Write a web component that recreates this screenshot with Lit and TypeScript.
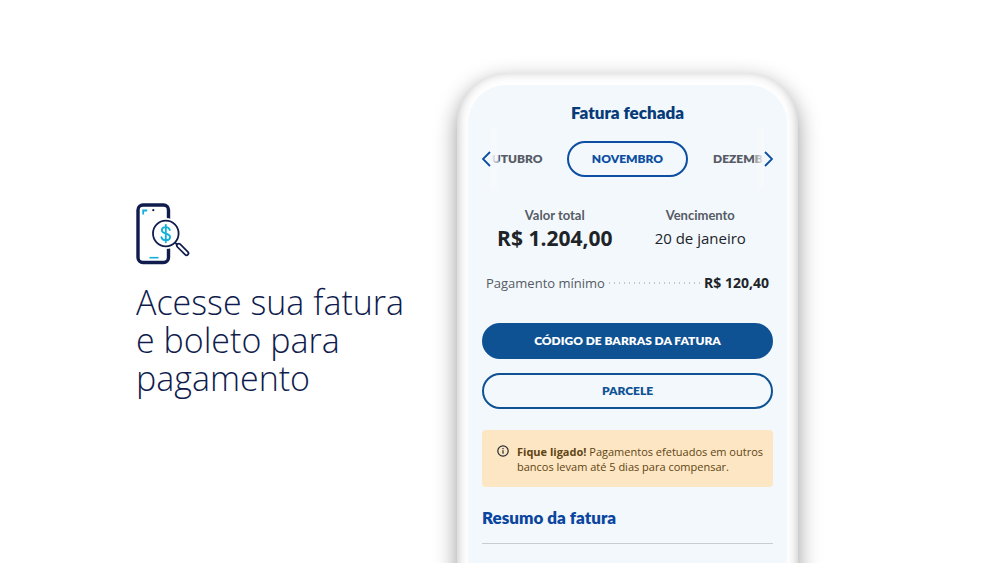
import { LitElement, html, css } from "lit";
import { customElement, state } from "lit/decorators.js";

@customElement("invoice-intro")
export class InvoiceIntro extends LitElement {
  static styles = css`
    :host {
      display: block;
      color: #0f1c4d;
    }
    .icon {
      display: block;
      width: 54px;
      height: 64px;
    }
    .title {
      margin: 17px 0 0;
      max-width: 280px;
      font: 300 34px/38px "Open Sans", sans-serif;
    }
  `;

  render() {
    return html`
      <svg class="icon" viewBox="0 0 54 64" fill="none" aria-hidden="true">
        <rect x="2" y="3" width="30.500" height="57.500" rx="5" stroke="#0f1c4d" stroke-width="3.400" />
        <circle cx="29.800" cy="31.500" r="15.500" fill="#fff" />
        <circle cx="29.800" cy="31.500" r="12.800" stroke="#0f1c4d" stroke-width="1.800" />
        <path d="M39.300 40.800l2.200 2.200" stroke="#0f1c4d" stroke-width="1.800" />
        <path d="M42.800 43.600l7.700 7.700" stroke="#0f1c4d" stroke-width="5.600" stroke-linecap="round" />
        <path d="M42.800 43.600l7.700 7.700" stroke="#fff" stroke-width="2.200" stroke-linecap="round" />
        <path d="M7.200 12.500V8.500h4" stroke="#14b0da" stroke-width="1.800" />
        <circle cx="17.300" cy="8.200" r="1.100" fill="#0f1c4d" />
        <path d="M13.500 55.700h9" stroke="#14b0da" stroke-width="1.600" />
        <path d="M33.800 28c-.6-2-2.100-2.900-4-2.900-2.300 0-3.900 1.200-3.900 3.100 0 4.500 8.200 2.400 8.200 6.900 0 2-1.700 3.200-4.200 3.200-2.300 0-4-1.100-4.500-3.200M29.800 23v17.300"
          stroke="#14b0da" stroke-width="1.900" stroke-linecap="round" />
      </svg>
      <h1 class="title">Acesse sua fatura e&nbsp;boleto para pagamento</h1>
    `;
  }
}

@customElement("month-picker")
export class MonthPicker extends LitElement {
  static styles = css`
    :host {
      display: grid;
      grid-template-columns: 9px minmax(0, 1fr) 9px;
      align-items: center;
    }
    button {
      padding: 0;
      border: 0;
      background: none;
      font: 800 12px/16px Lato, sans-serif;
      cursor: pointer;
    }
    .arrow {
      display: flex;
      color: #0b4ea2;
    }
    .arrow svg {
      width: 9px;
      height: 16px;
    }
    .track {
      position: relative;
      display: flex;
      justify-content: center;
      align-items: center;
      gap: 25px;
      height: 62px;
      overflow: hidden;
    }
    .track::before,
    .track::after {
      content: "";
      position: absolute;
      top: 0;
      bottom: 0;
      width: 8px;
    }
    .track::before {
      left: 0;
      background: linear-gradient(90deg, #f7fafc, rgb(247 250 252 / 40%));
    }
    .track::after {
      right: 0;
      background: linear-gradient(270deg, #f7fafc, rgb(247 250 252 / 40%));
    }
    .month {
      flex: none;
      width: 60px;
      color: #565b65;
    }
    .month.before {
      text-align: right;
    }
    .month.after {
      text-align: left;
    }
    .month.current {
      box-sizing: border-box;
      width: 121px;
      height: 36px;
      border: 2px solid #0b4ea2;
      border-radius: 18px;
      color: #0b4ea2;
      text-align: center;
    }
  `;

  render() {
    return html`
      <button class="arrow" aria-label="Mês anterior">
        <svg viewBox="0 0 9 16" fill="none" stroke="currentColor" stroke-width="1.800"><path d="M8 1L1 8 8 15" /></svg>
      </button>
      <div class="track">
        <button class="month before">OUTUBRO</button>
        <button class="month current" aria-current="true">NOVEMBRO</button>
        <button class="month after">DEZEMBRO</button>
      </div>
      <button class="arrow" aria-label="Próximo mês">
        <svg viewBox="0 0 9 16" fill="none" stroke="currentColor" stroke-width="1.800"><path d="M1 1l7 7-7 7" /></svg>
      </button>
    `;
  }
}

@customElement("invoice-phone")
export class InvoicePhone extends LitElement {
  static styles = css`
    :host {
      display: block;
      box-sizing: border-box;
      padding: 12px 11px 0;
      border-radius: 50px 50px 0 0;
      background: #fff;
      box-shadow: 0 8px 22px rgb(0 0 0 / 40%), inset 0 -2px 12px rgb(0 0 0 / 28%);
      font-family: "Open Sans", sans-serif;
      color: #202428;
    }
    .screen {
      box-sizing: border-box;
      height: 100%;
      padding: 18px 14px 0;
      border-radius: 38px 38px 0 0;
      background: #f2f8fc;
    }
    .heading {
      margin: 0;
      font: 800 17px/20px Lato, sans-serif;
      color: #063a78;
      text-align: center;
    }
    month-picker {
      margin-top: 5px;
    }
    .totals {
      display: grid;
      grid-template-columns: 1fr 1fr;
      margin: 16px 0 0;
      text-align: center;
    }
    .label {
      font: 700 13px/18px Lato, sans-serif;
      color: #565b65;
    }
    .value {
      margin: 0;
      font-size: 15px;
      line-height: 28px;
    }
    .value.total {
      font-size: 21px;
      font-weight: 700;
    }
    .minimum {
      display: flex;
      align-items: center;
      margin: 21px 4px 0;
      line-height: 20px;
    }
    .minimum-label {
      font-size: 13px;
      color: #565b65;
    }
    .dots {
      flex: 1;
      height: 2px;
      margin: 0 2px;
      background: radial-gradient(circle, #c0c6cd 1px, transparent 1px) 0 0 / 5px 2px;
    }
    .minimum-value {
      font-size: 14px;
      font-weight: 700;
    }
    .actions {
      display: grid;
      gap: 14px;
      margin-top: 30px;
    }
    .action {
      height: 36px;
      border: 2px solid #0f5294;
      border-radius: 18px;
      background: none;
      color: #0f5294;
      font: 800 12px/16px Lato, sans-serif;
      cursor: pointer;
    }
    .action.primary {
      background: #0f5294;
      color: #fff;
    }
    .notice {
      display: flex;
      gap: 8px;
      margin-top: 21px;
      padding: 14px 8px 13px 15px;
      border-radius: 4px;
      background: #fde6c3;
      color: #5f4513;
      font-size: 11px;
      line-height: 15px;
    }
    .notice svg {
      flex: none;
      width: 12px;
      height: 12px;
      margin-top: 1px;
    }
    .notice p {
      margin: 0;
    }
    .summary {
      margin: 21px 0 0;
      padding-bottom: 15px;
      border-bottom: 1px solid #c6cdd3;
      font: 800 17px/20px Lato, sans-serif;
      color: #0a46a0;
    }
  `;

  @state() private total = "R$ 1.204,00";
  @state() private dueDate = "20 de janeiro";
  @state() private minimum = "R$ 120,40";

  render() {
    return html`
      <div class="screen">
        <h2 class="heading">Fatura fechada</h2>
        <month-picker></month-picker>
        <dl class="totals">
          <div>
            <dt class="label">Valor total</dt>
            <dd class="value total">${this.total}</dd>
          </div>
          <div>
            <dt class="label">Vencimento</dt>
            <dd class="value">${this.dueDate}</dd>
          </div>
        </dl>
        <div class="minimum">
          <span class="minimum-label">Pagamento mínimo</span>
          <span class="dots"></span>
          <span class="minimum-value">${this.minimum}</span>
        </div>
        <div class="actions">
          <button class="action primary">CÓDIGO DE BARRAS DA FATURA</button>
          <button class="action">PARCELE</button>
        </div>
        <div class="notice" role="note">
          <svg viewBox="0 0 12 12" fill="none" stroke="#262a30" stroke-width="1.200" aria-hidden="true">
            <circle cx="6" cy="6" r="5.200" />
            <path d="M6 5.300v3.500M6 3.100v1.200" />
          </svg>
          <p><b>Fique ligado!</b> Pagamentos efetuados em outros bancos levam até 5 dias para compensar.</p>
        </div>
        <h3 class="summary">Resumo da fatura</h3>
      </div>
    `;
  }
}

@customElement("app-root")
export class AppRoot extends LitElement {
  static styles = css`
    :host {
      display: block;
      background: #fff;
    }
    .page {
      display: grid;
      grid-template-columns: minmax(280px, 321fr) 341px minmax(0, 202fr);
      box-sizing: border-box;
      min-height: 100vh;
      padding-left: 136px;
      overflow: hidden;
    }
    invoice-intro {
      padding-top: 202px;
    }
    invoice-phone {
      margin: 73px 0 -40px;
    }
  `;

  render() {
    return html`
      <main class="page">
        <invoice-intro></invoice-intro>
        <invoice-phone></invoice-phone>
      </main>
    `;
  }
}
